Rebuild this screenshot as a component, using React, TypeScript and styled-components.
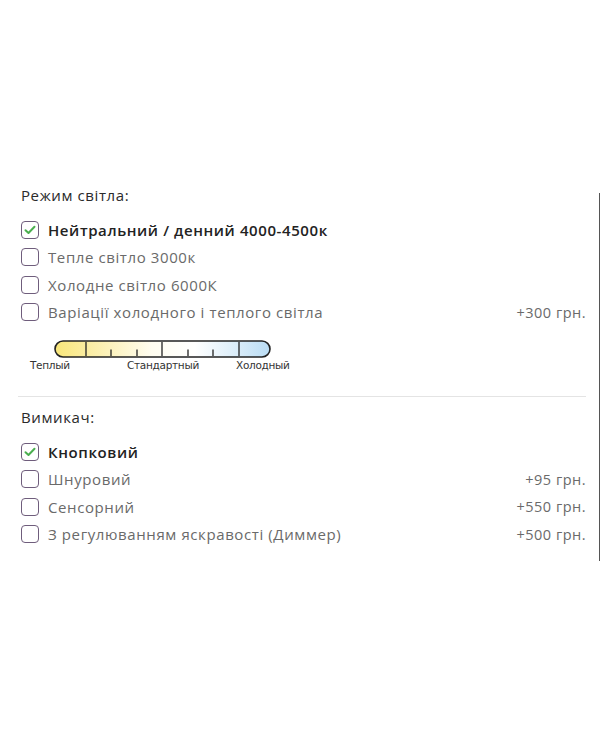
import styled, { createGlobalStyle } from "styled-components";

const GlobalStyle = createGlobalStyle`
  html, body {
    margin: 0;
    padding: 0;
    background: #fff;
  }
  body {
    font-family: "Open Sans", "Noto Sans", sans-serif;
  }
`;

const Page = styled.div`
  width: 600px;
  height: 750px;
  box-sizing: border-box;
  padding-top: 183px;
  display: flex;
`;

const Panel = styled.div`
  flex: 1;
  padding: 0 13px 0 21px;
`;

const Edge = styled.div`
  width: 3px;
  height: 368px;
  margin-top: 10px;
  background: #555;
`;

const Group = styled.section`
  display: flex;
  flex-direction: column;
`;

const GroupTitle = styled.h3`
  margin: 0 0 9px;
  font-size: 15px;
  font-weight: 500;
  letter-spacing: 0.6px;
  color: #2a2a2a;
  line-height: 24px;
`;

const Option = styled.label`
  display: flex;
  align-items: center;
  height: 27.5px;
  cursor: pointer;
`;

const Box = styled.span`
  width: 18px;
  height: 18px;
  box-sizing: border-box;
  border: 1.5px solid #6f5d7c;
  border-radius: 4px;
  display: flex;
  align-items: center;
  justify-content: center;
  flex-shrink: 0;
`;

const Name = styled.span<{ checked?: boolean }>`
  margin-left: 9px;
  flex: 1;
  font-size: 15px;
  letter-spacing: 0.6px;
  font-weight: ${(p) => (p.checked ? 600 : 400)};
  color: ${(p) => (p.checked ? "#222" : "#6a6a6a")};
`;

const Price = styled.span`
  font-size: 14.5px;
  color: #6a6a6a;
  letter-spacing: 0.5px;
`;

const Scale = styled.div`
  margin: 13px 0 0 8px;
  width: 275px;
`;

const Divider = styled.hr`
  border: none;
  border-top: 1px solid #e4e4e4;
  margin: 12px 0 8px -3px;
  width: 568px;
`;

const Check = () => (
  <svg width="12" height="10" viewBox="0 0 12 10">
    <path d="M1.5 5.2 L4.5 8 L10.5 1.8" fill="none" stroke="#4caf50" strokeWidth="2" strokeLinecap="round" strokeLinejoin="round" />
  </svg>
);

type Item = { name: string; price?: string; checked?: boolean };

const lightModes: Item[] = [
  { name: "Нейтральний / денний 4000-4500к", checked: true },
  { name: "Тепле світло 3000к" },
  { name: "Холодне світло 6000К" },
  { name: "Варіації холодного і теплого світла", price: "+300 грн." },
];

const switches: Item[] = [
  { name: "Кнопковий", checked: true },
  { name: "Шнуровий", price: "+95 грн." },
  { name: "Сенсорний", price: "+550 грн." },
  { name: "З регулюванням яскравості (Диммер)", price: "+500 грн." },
];

function OptionRow({ item }: { item: Item }) {
  return (
    <Option>
      <Box>{item.checked && <Check />}</Box>
      <Name checked={item.checked}>{item.name}</Name>
      {item.price && <Price>{item.price}</Price>}
    </Option>
  );
}

// colour temperature bar: warm yellow -> white -> cool blue, with ticks
function TempScale() {
  const ticks = [
    { x: 57, tall: true },
    { x: 82, tall: false },
    { x: 108, tall: false },
    { x: 133, tall: true },
    { x: 159, tall: false },
    { x: 184, tall: false },
    { x: 210, tall: true },
  ];
  const label = { fontSize: 10.5, fontFamily: "'DejaVu Sans', sans-serif", fill: "#333", letterSpacing: -0.3 };
  return (
    <svg width="275" height="40" viewBox="0 0 275 40">
      <defs>
        <linearGradient id="temp" x1="0" x2="1" y1="0" y2="0">
          <stop offset="0" stopColor="#f8e67a" />
          <stop offset="0.18" stopColor="#fbeea9" />
          <stop offset="0.45" stopColor="#fffdf0" />
          <stop offset="0.65" stopColor="#ffffff" />
          <stop offset="0.85" stopColor="#d9ecf9" />
          <stop offset="1" stopColor="#b9dcf4" />
        </linearGradient>
      </defs>
      <rect x="26" y="2" width="215" height="16" rx="8" fill="url(#temp)" stroke="#222" strokeWidth="1.6" />
      {ticks.map((t) => (
        <line key={t.x} x1={t.x} x2={t.x} y1={t.tall ? 3 : 10.5} y2="17" stroke="#222" strokeWidth="1.3" />
      ))}
      <text x="1" y="30" {...label}>Теплый</text>
      <text x="98" y="30" {...label}>Стандартный</text>
      <text x="207" y="30" {...label}>Холодный</text>
    </svg>
  );
}

export default function App() {
  return (
    <>
      <GlobalStyle />
      <Page>
        <Panel>
          <Group>
            <GroupTitle>Режим світла:</GroupTitle>
            {lightModes.map((m) => (
              <OptionRow key={m.name} item={m} />
            ))}
          </Group>
          <Scale>
            <TempScale />
          </Scale>
          <Divider />
          <Group>
            <GroupTitle>Вимикач:</GroupTitle>
            {switches.map((m) => (
              <OptionRow key={m.name} item={m} />
            ))}
          </Group>
        </Panel>
        <Edge />
      </Page>
    </>
  );
}
